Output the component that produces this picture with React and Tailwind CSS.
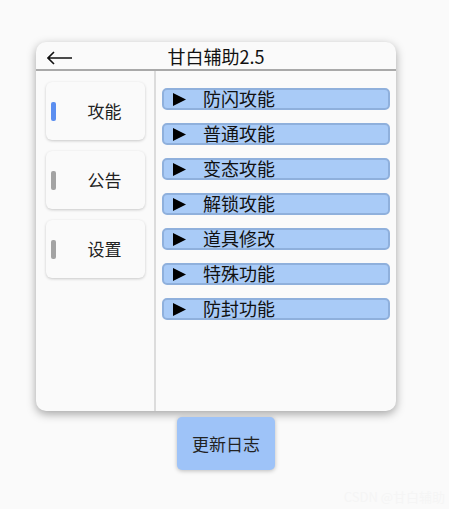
import React from 'react';

const navs = [
  { label: '攻能', active: true },
  { label: '公告', active: false },
  { label: '设置', active: false },
];

const items = ['防闪攻能', '普通攻能', '变态攻能', '解锁攻能', '道具修改', '特殊功能', '防封功能'];

export default function App() {
  return (
    <div
      className="relative h-[509px] w-[449px] bg-[#fafafa] pt-[42px] pl-[36px]"
      style={{ fontFamily: '"Noto Sans CJK SC", "Noto Sans", sans-serif' }}
    >
      <div className="flex h-[369px] w-[360px] flex-col overflow-hidden rounded-[10px] bg-[#fafafa] shadow-[0_3px_10px_rgba(0,0,0,0.35)]">
        {/* header */}
        <div className="relative flex h-[29px] shrink-0 items-center justify-center border-b-2 border-[#a9a9a9]">
          <svg width="26" height="14" viewBox="0 0 26 14" className="absolute left-[11px] top-[9px]">
            <path d="M1 7 H25 M7 1 L1 7 L7 13" fill="none" stroke="#111" strokeWidth="1.6" />
          </svg>
          <span className="text-[18px] leading-[22px] text-[#111]">甘白辅助2.5</span>
        </div>

        <div className="flex flex-1">
          {/* sidebar */}
          <div className="flex w-[120px] flex-col gap-[11px] border-r-2 border-[#dcdcdc] pt-[11px] pl-[10px]">
            {navs.map(n => (
              <div
                key={n.label}
                className="relative flex h-[58px] w-[99px] items-center justify-center rounded-[6px] bg-[#fafafa] shadow-[0_1px_3px_rgba(0,0,0,0.2)]"
              >
                <span
                  className={`absolute left-[5px] top-[20px] h-[19px] w-[5px] rounded-[2px] ${n.active ? 'bg-[#5b8ef0]' : 'bg-[#a3a3a3]'}`}
                />
                <span className="pl-[18px] text-[17px] text-[#222]">{n.label}</span>
              </div>
            ))}
          </div>

          {/* items */}
          <div className="flex flex-1 flex-col gap-[13px] px-[6px] pt-[17px]">
            {items.map(t => (
              <div
                key={t}
                className="flex h-[22px] items-center rounded-[5px] border-2 border-[#8fb0dc] bg-[#a9cbf7] pl-[9px]"
              >
                <svg width="13" height="13" viewBox="0 0 13 13" className="shrink-0">
                  <polygon points="0,0 13,6.5 0,13" fill="#000" />
                </svg>
                <span className="-mt-[2px] pl-[17px] text-[18px] leading-[18px] text-[#111]">{t}</span>
              </div>
            ))}
          </div>
        </div>
      </div>

      <div className="ml-[141px] mt-[6px] flex h-[53px] w-[98px] items-center justify-center rounded-[5px] bg-[#9ec3f8] shadow-[0_1px_4px_rgba(0,0,0,0.25)]">
        <span className="text-[17px] text-[#222]">更新日志</span>
      </div>

      <span className="absolute bottom-[3px] right-[4px] text-[13px] text-[#f5f5f5]">CSDN @甘白辅助</span>
    </div>
  );
}
